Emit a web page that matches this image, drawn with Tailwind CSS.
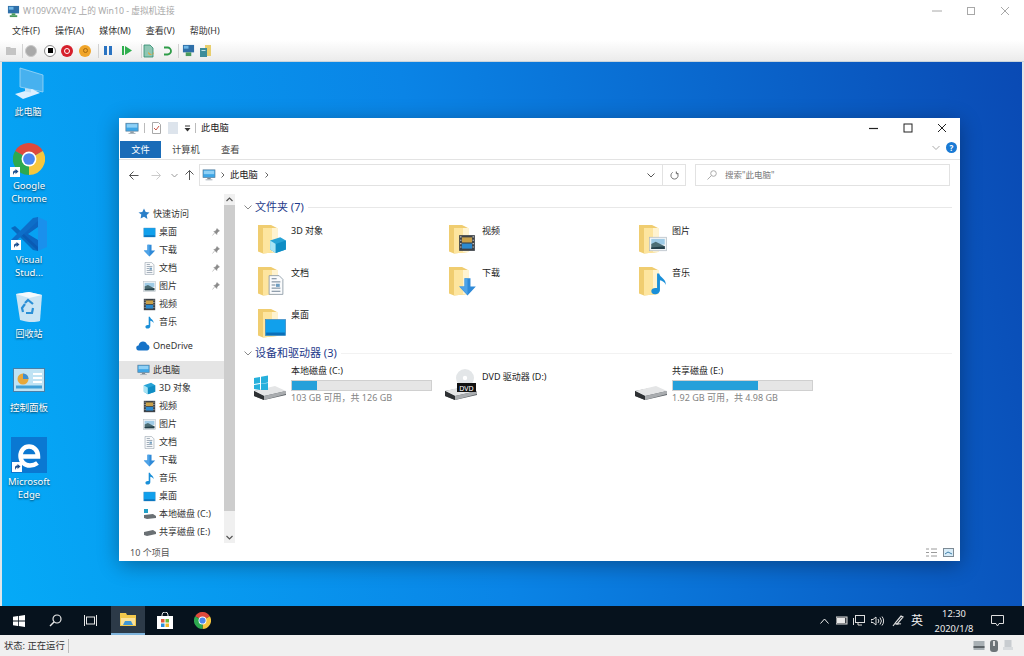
<!DOCTYPE html>
<html lang="zh-CN">
<head>
  <meta charset="UTF-8" />
  <title>W109VXV4Y2 上的 Win10 - 虚拟机连接</title>
  <script src="https://cdn.jsdelivr.net/npm/@tailwindcss/browser@4"></script>
</head>
<body class="w-[1024px] h-[656px] overflow-hidden bg-white font-['Noto_Sans','Noto_Sans_CJK_SC',sans-serif] text-[9px] leading-[12px] text-[#222]">

  <!-- shared icons -->
  <svg class="absolute w-0 h-0">
    <symbol id="pc" viewBox="0 0 16 14">
      <rect x="1" y="1" width="14" height="9" fill="#3ea6e6" stroke="#5b7f9b" stroke-width=".8"/>
      <rect x="2" y="2" width="12" height="4" fill="#8fd0f5"/>
      <rect x="6" y="10.500" width="4" height="1.500" fill="#7d8a94"/>
      <rect x="4" y="12" width="8" height="1.200" fill="#a9b4bc"/>
    </symbol>
    <symbol id="folder" viewBox="0 0 30 30">
      <path d="M1 1h13l6 3v24l-14 1.500-5-2z" fill="#f0cd70"/>
      <path d="M6 4h14.500v24l-14.500 1.500z" fill="#fde59f"/>
      <path d="M15 4h5.500v24h-5.500z" fill="#fff3d0"/>
    </symbol>
    <symbol id="i3d" viewBox="0 0 16 16">
      <path d="M1 4l9-3 5 3v8l-9 3-5-3z" fill="#27a3d6"/>
      <path d="M1 4l5 3v8l-5-3z" fill="#a8e4f5"/>
      <path d="M6 7l9-3v8l-9 3z" fill="#0f8dc4"/>
    </symbol>
    <symbol id="ivideo" viewBox="0 0 16 16">
      <rect x="1" y="1" width="14" height="14" fill="#3d4248"/>
      <rect x="3.500" y="3" width="9" height="4.500" fill="#c9a14a"/>
      <rect x="3.500" y="8.500" width="9" height="4.500" fill="#2b8ad0"/>
      <path d="M2 2h1v1h-1zM2 5h1v1h-1zM2 8h1v1h-1zM2 11h1v1h-1zM13 2h1v1h-1zM13 5h1v1h-1zM13 8h1v1h-1zM13 11h1v1h-1z" fill="#e8e8e8"/>
    </symbol>
    <symbol id="ipic" viewBox="0 0 16 16">
      <rect x="0.500" y="2" width="15" height="12" fill="#f1f4f6" stroke="#aeb8c0" stroke-width=".6"/>
      <rect x="2" y="3.500" width="12" height="5" fill="#9fcbe6"/>
      <path d="M2 8l4-2 8 4v2.500h-12z" fill="#4d6e75"/>
      <path d="M2 11l12-1v2.500h-12z" fill="#26404a"/>
    </symbol>
    <symbol id="idoc" viewBox="0 0 16 16">
      <path d="M2.500 .5h8l3 3v12h-11z" fill="#fafbfc" stroke="#8d9aa6" stroke-width=".7"/>
      <path d="M4.500 3h4M4.500 5.500h7M4.500 8h3M4.500 10.500h7M4.500 13h7" stroke="#6f8193" stroke-width=".8"/>
      <rect x="8" y="7" width="3" height="2.500" fill="#6f9dc0"/>
    </symbol>
    <symbol id="idown" viewBox="0 0 16 16">
      <path d="M5.500 1h5v7h4.500l-7 7.500-7-7.500h4.500z" fill="#2f8ad8"/>
      <path d="M5.500 1h2.500v14l-7-7h4.500z" fill="#4ea3e8"/>
    </symbol>
    <symbol id="imusic" viewBox="0 0 16 16">
      <path d="M7 1h1.500c.5 3 5 3.500 4.500 8-.5-2-2.500-3-4-3.300v6.800c0 1.800-1.700 3-3.500 3s-2.500-1.200-2.500-2.300c0-1.500 1.800-2.500 4-2z" fill="#1a8fd8"/>
    </symbol>
    <symbol id="idesk" viewBox="0 0 16 16">
      <rect x="1" y="2.500" width="14" height="11" fill="#11a0ec" stroke="#3a87bf" stroke-width=".5"/>
      <rect x="1.500" y="11.500" width="13" height="1.800" fill="#0b6fb8"/>
    </symbol>
    <symbol id="drive" viewBox="0 0 34 26">
      <path d="M1 16l21-4 11 5v3l-22 5-10-4z" fill="#5c6166"/>
      <path d="M1 16l21-5 11 5-22 5z" fill="#e4e5e6"/>
      <path d="M1 16l10 5v4l-10-4z" fill="#2d3033"/>
      <path d="M11 21l22-5v3l-22 6z" fill="#a9acaf"/>
    </symbol>
    <symbol id="chrome" viewBox="0 0 24 24">
      <path d="M12 12L1.600 6A12 12 0 0 1 22.400 6z" fill="#de4a3c"/>
      <path d="M12 12L22.400 6A12 12 0 0 1 12 24z" fill="#f6c63d"/>
      <path d="M12 12L12 24A12 12 0 0 1 1.600 6z" fill="#2da94f"/>
      <circle cx="12" cy="12" r="5.600" fill="#fff"/>
      <circle cx="12" cy="12" r="4.400" fill="#4b87ee"/>
    </symbol>
    <symbol id="shortcut" viewBox="0 0 10 10">
      <rect width="10" height="10" fill="#fff"/>
      <path d="M3 8V5.500c0-1.500 1-2 2.500-2V2L8.500 4.500 5.500 7V5.500C4.500 5.500 4 6 3 8z" fill="#1c4f8f"/>
    </symbol>
    <symbol id="pin" viewBox="0 0 8 8">
      <path d="M5 .5l2.500 2.500-1 .5-1.500 1.500-.2 1.500-3-3 1.500-.2L4.500 1.500zM2.500 5L.5 7.500" fill="#8a8a8a" stroke="#8a8a8a" stroke-width=".5"/>
    </symbol>
  </svg>

  <div class="flex flex-col w-[1024px] h-[656px]">

    <!-- vm window title -->
    <div class="h-[22px] flex items-center pl-[7px] text-[8.700px] text-[#a8a8a8] bg-white shrink-0">
      <svg class="w-[13px] h-[13px] mr-[3px]" viewBox="0 0 14 14">
        <rect x="1" y="1" width="12" height="8" fill="#2f6fa8"/>
        <rect x="2" y="2" width="5" height="3" fill="#6fb6e6"/>
        <rect x="5" y="9" width="4" height="2" fill="#4a9a5c"/>
        <rect x="3" y="11" width="8" height="2" fill="#4a9a5c"/>
      </svg>
      <span>W109VXV4Y2 上的 Win10 - 虚拟机连接</span>
      <div class="ml-auto flex items-center text-[#a8a8a8]">
        <svg class="w-[34px] h-[10px]" viewBox="0 0 34 10"><path d="M12 5h10" stroke="currentColor"/></svg>
        <svg class="w-[34px] h-[10px]" viewBox="0 0 34 10"><rect x="13.500" y="1.500" width="7" height="7" fill="none" stroke="currentColor"/></svg>
        <svg class="w-[34px] h-[10px] mr-[2px]" viewBox="0 0 34 10"><path d="M13 1l8 8M21 1l-8 8" stroke="currentColor"/></svg>
      </div>
    </div>

    <!-- vm menu -->
    <div class="h-[18px] flex items-center gap-[15px] pl-[12px] text-[9px] text-[#333] bg-white shrink-0">
      <span>文件(F)</span><span>操作(A)</span><span>媒体(M)</span><span>查看(V)</span><span>帮助(H)</span>
    </div>

    <!-- vm toolbar -->
    <div class="h-[22px] flex items-center pl-[5px] bg-linear-to-b from-white to-[#ebebeb] border-b border-[#c8d4dc] shrink-0">
      <svg class="w-[12px] h-[10px]" viewBox="0 0 12 10"><path d="M1 1h4l1 1h5v7H1z" fill="#c4c4c4"/></svg>
      <div class="w-px h-[14px] bg-[#d2d2d2] ml-[5px]"></div>
      <div class="w-[12px] h-[12px] rounded-full bg-[#a9a9a9] border border-[#c8c8c8] ml-[2px]"></div>
      <div class="w-[12px] h-[12px] rounded-full bg-white border border-[#888] ml-[7px] flex items-center justify-center"><div class="w-[5px] h-[5px] bg-black"></div></div>
      <div class="w-[12px] h-[12px] rounded-full bg-[#d6202c] ml-[5px] flex items-center justify-center"><div class="w-[6px] h-[6px] rounded-full border border-white"></div></div>
      <div class="w-[12px] h-[12px] rounded-full bg-[#f0a52a] ml-[6px] flex items-center justify-center"><div class="w-[5px] h-[5px] rounded-full border border-[#a86a10]"></div></div>
      <div class="w-px h-[14px] bg-[#d2d2d2] ml-[7px]"></div>
      <div class="flex gap-[2px] ml-[5px]"><div class="w-[3px] h-[9px] bg-[#2a73c2]"></div><div class="w-[3px] h-[9px] bg-[#2a73c2]"></div></div>
      <div class="flex items-center ml-[10px]">
        <div class="w-[2px] h-[9px] bg-[#2fae4e] mr-[1px]"></div>
        <svg class="w-[7px] h-[9px]" viewBox="0 0 7 9"><path d="M0 0l7 4.500-7 4.500z" fill="#2fae4e"/></svg>
      </div>
      <div class="w-px h-[14px] bg-[#d2d2d2] ml-[9px]"></div>
      <svg class="w-[12px] h-[14px] ml-[1px]" viewBox="0 0 12 14"><path d="M1 1h6l3 3v9H1z" fill="#8fc7b4" stroke="#2c8a6c" stroke-width=".8"/><path d="M5 8a3 3 0 1 0 6 0l-2 3z" fill="#e9a43a"/></svg>
      <svg class="w-[10px] h-[10px] ml-[7px]" viewBox="0 0 10 10"><path d="M2 1.500h3.500a3.500 3.500 0 0 1 0 7H2" fill="none" stroke="#2e9c48" stroke-width="1.800"/></svg>
      <div class="w-px h-[14px] bg-[#d2d2d2] ml-[6px]"></div>
      <svg class="w-[13px] h-[13px] ml-[3px]" viewBox="0 0 14 14"><rect x="1" y="1" width="12" height="8" fill="#2f6fa8"/><rect x="2" y="2" width="5" height="3" fill="#6fb6e6"/><rect x="4" y="9" width="6" height="4" fill="#4a9a5c"/></svg>
      <svg class="w-[13px] h-[14px] ml-[4px]" viewBox="0 0 13 14"><rect x="6" y="1" width="6" height="11" fill="#e8cf6e"/><rect x="1" y="4" width="7" height="9" fill="#3d8c99"/><rect x="2.500" y="6" width="4" height="1" fill="#bfe3e8"/></svg>
    </div>

    <!-- desktop -->
    <div class="relative flex-1 min-h-0 border-l-2 border-r-2 border-[#dfe6ea] bg-linear-[78deg] from-[#05aaf7] via-[#0a84e6] via-45% to-[#0a4ab4]">

      <!-- desktop icons -->
      <div class="absolute left-[-3px] top-[5px] w-[58px] flex flex-col items-center text-white text-[9px] leading-[13px] [text-shadow:0_1px_2px_#000a]">
        <svg class="w-[34px] h-[36px]" viewBox="0 0 34 36">
          <path d="M9 1l23 7v17L9 20z" fill="#5db7ee" fill-opacity=".75" stroke="#9fd8f8" stroke-width=".8"/>
          <path d="M4 27l17-5 8 4-17 6z" fill="#dcefff"/>
          <path d="M14 21l6 1.500v3l-6-1z" fill="#bde0f7"/>
        </svg>
        <span class="mt-[2px]">此电脑</span>
      </div>
      <div class="absolute left-[-2px] top-[81px] w-[58px] flex flex-col items-center text-white text-[9.500px] leading-[13px] text-center [text-shadow:0_1px_2px_#000a]">
        <div class="relative w-[32px] h-[32px]">
          <svg class="w-[32px] h-[32px]"><use href="#chrome"/></svg>
          <svg class="absolute left-[-3px] bottom-[-2px] w-[10px] h-[10px]"><use href="#shortcut"/></svg>
        </div>
        <span class="mt-[4px]">Google<br>Chrome</span>
      </div>
      <div class="absolute left-[-2px] top-[154px] w-[58px] flex flex-col items-center text-white text-[9.500px] leading-[13px] text-center [text-shadow:0_1px_2px_#000a]">
        <div class="relative w-[38px] h-[36px]">
          <svg class="w-[38px] h-[36px]" viewBox="0 0 38 36">
            <path d="M28 1l9 4v26l-9 4z" fill="#1a90ec"/>
            <path d="M28 1L10 18l18 17V24L18 18l10-7z" fill="#0c66c2"/>
            <path d="M1 12l4-2 23 21v4l-5-1z" fill="#0a57ad" fill-opacity=".75"/>
            <path d="M1 24l4 2L28 5V1l-5 1z" fill="#0d6ec9"/>
          </svg>
          <svg class="absolute left-[1px] bottom-[2px] w-[10px] h-[10px]"><use href="#shortcut"/></svg>
        </div>
        <span class="mt-[1px]">Visual<br>Stud...</span>
      </div>
      <div class="absolute left-[-2px] top-[229px] w-[58px] flex flex-col items-center text-white text-[9px] leading-[13px] [text-shadow:0_1px_2px_#000a]">
        <svg class="w-[30px] h-[32px]" viewBox="0 0 30 32">
          <path d="M2 3l13-2 13 3-2 26c-6 2-14 1-20-1z" fill="#c9e4f4"/>
          <path d="M2 3l13-2 13 3-13 3z" fill="#f4fafd"/>
          <path d="M11 12l3 -3 5 4M19 17l-1 5-6 0M9 21l-1-4 3-4" fill="none" stroke="#2a8fd6" stroke-width="2.200"/>
        </svg>
        <span class="mt-[4px]">回收站</span>
      </div>
      <div class="absolute left-[-2px] top-[306px] w-[58px] flex flex-col items-center text-white text-[9.500px] leading-[13px] [text-shadow:0_1px_2px_#000a]">
        <svg class="w-[32px] h-[24px]" viewBox="0 0 32 24">
          <rect x=".5" y=".5" width="31" height="23" fill="#bfe3f4" stroke="#4a7fa6"/>
          <circle cx="10" cy="11" r="5.500" fill="#e8a83a"/>
          <path d="M10 11V5.500a5.500 5.500 0 0 1 5.500 5.500z" fill="#3d8fd1"/>
          <path d="M20 6h9M20 10h9M20 14h9" stroke="#fff" stroke-width="2"/>
          <path d="M3 19h26" stroke="#3fa0d8" stroke-width="3"/>
        </svg>
        <span class="mt-[9px]">控制面板</span>
      </div>
      <div class="absolute left-[-2px] top-[375px] w-[58px] flex flex-col items-center text-white text-[9.500px] leading-[13px] text-center [text-shadow:0_1px_2px_#000a]">
        <div class="relative w-[36px] h-[36px] bg-[#0a78d2]">
          <svg class="w-[36px] h-[36px]" viewBox="0 0 36 36">
            <path d="M10 19.500h17c0-6-4-10-9-10s-8.500 4-8.500 9.500 4 9.500 9.500 9.500c3 0 5.500-1 7.500-2.500" fill="none" stroke="#fff" stroke-width="4.500"/>
          </svg>
          <svg class="absolute left-[1px] bottom-[1px] w-[10px] h-[10px]"><use href="#shortcut"/></svg>
        </div>
        <span class="mt-[2px]">Microsoft<br>Edge</span>
      </div>

      <!-- explorer window -->
      <div class="absolute left-[117px] top-[56px] w-[841px] h-[443px] bg-white flex flex-col shadow-[0_4px_20px_#0005]">

        <!-- title row -->
        <div class="h-[20px] flex items-center pl-[6px] shrink-0 text-[9.500px]">
          <svg class="w-[14px] h-[13px]"><use href="#pc"/></svg>
          <div class="w-px h-[10px] bg-[#bbb] ml-[5px]"></div>
          <svg class="w-[9px] h-[12px] ml-[7px]" viewBox="0 0 9 12"><path d="M.5.5h6l2 2v9h-8z" fill="#fff" stroke="#a9a9a9"/><path d="M2 6l2 2 3-4" fill="none" stroke="#c9584a"/></svg>
          <div class="w-[10px] h-[12px] bg-[#dde4ec] ml-[7px]"></div>
          <svg class="w-[7px] h-[7px] ml-[6px]" viewBox="0 0 7 7"><path d="M1 1h5" stroke="#333"/><path d="M.5 3h6L3.500 6.500z" fill="#333"/></svg>
          <div class="w-px h-[10px] bg-[#bbb] ml-[4px]"></div>
          <span class="ml-[5px] text-[9.300px]">此电脑</span>
          <div class="ml-auto flex items-center text-[#222]">
            <svg class="w-[34px] h-[10px]" viewBox="0 0 34 10"><path d="M12 5.500h9" stroke="currentColor" stroke-width="1.200"/></svg>
            <svg class="w-[34px] h-[10px]" viewBox="0 0 34 10"><rect x="13" y="1" width="8" height="8" fill="none" stroke="currentColor"/></svg>
            <svg class="w-[34px] h-[10px] mr-[1px]" viewBox="0 0 34 10"><path d="M13 1l8 8M21 1l-8 8" stroke="currentColor"/></svg>
          </div>
        </div>

        <!-- ribbon tabs -->
        <div class="h-[22px] flex items-start shrink-0 border-b border-[#e3e3e3] pt-[3px] pl-[1px] text-[9.300px]">
          <div class="w-[41px] h-[17px] bg-[#1a6cb8] text-white flex items-center justify-center">文件</div>
          <span class="ml-[11px] mt-[3px] text-[#444]">计算机</span>
          <span class="ml-[21px] mt-[3px] text-[#444]">查看</span>
          <div class="ml-auto flex items-center gap-[6px] pr-[3px] mt-[1px]">
            <svg class="w-[8px] h-[6px]" viewBox="0 0 8 6"><path d="M.5 1l3.500 3.500L7.500 1" fill="none" stroke="#aaa"/></svg>
            <div class="w-[11px] h-[11px] rounded-full bg-[#1a7ad4] text-white text-[8px] leading-[11px] text-center font-bold">?</div>
          </div>
        </div>

        <!-- nav row -->
        <div class="h-[30px] flex items-center shrink-0 pl-[10px] pr-[10px]">
          <svg class="w-[10px] h-[9px]" viewBox="0 0 10 9"><path d="M4.500 .5l-4 4 4 4M.5 4.500h9" fill="none" stroke="#555"/></svg>
          <svg class="w-[10px] h-[9px] ml-[12px]" viewBox="0 0 10 9"><path d="M5.500 .5l4 4-4 4M9.500 4.500h-9" fill="none" stroke="#ccc"/></svg>
          <svg class="w-[7px] h-[5px] ml-[10px]" viewBox="0 0 7 5"><path d="M.5 1l3 3 3-3" fill="none" stroke="#999"/></svg>
          <svg class="w-[9px] h-[10px] ml-[7px]" viewBox="0 0 9 10"><path d="M.5 4.500l4-4 4 4M4.500 .5v9.500" fill="none" stroke="#555"/></svg>
          <div class="w-[487px] h-[22px] ml-[5px] border border-[#e2e2e2] flex items-center pl-[2px]">
            <svg class="w-[14px] h-[12px]"><use href="#pc"/></svg>
            <svg class="w-[4px] h-[6px] ml-[5px]" viewBox="0 0 4 6"><path d="M.5.5L3 3 .5 5.500" fill="none" stroke="#666"/></svg>
            <span class="ml-[5px] text-[9.300px]">此电脑</span>
            <svg class="w-[4px] h-[6px] ml-[7px]" viewBox="0 0 4 6"><path d="M.5.5L3 3 .5 5.500" fill="none" stroke="#666"/></svg>
            <svg class="w-[8px] h-[5px] ml-auto mr-[7px]" viewBox="0 0 8 5"><path d="M.5 .5L4 4l3.500-3.500" fill="none" stroke="#555"/></svg>
            <div class="w-[23px] h-full border-l border-[#e2e2e2] flex items-center justify-center">
              <svg class="w-[9px] h-[9px]" viewBox="0 0 10 10"><path d="M3 1.500a4 4 0 1 0 4 0M7 .5v2.500h2.500" fill="none" stroke="#666"/></svg>
            </div>
          </div>
          <div class="flex-1 h-[22px] ml-[9px] border border-[#e2e2e2] flex items-center pl-[11px] text-[#777] text-[8.500px]">
            <svg class="w-[10px] h-[10px] mr-[8px]" viewBox="0 0 10 10"><circle cx="6.500" cy="3.500" r="2.800" fill="none" stroke="#aaa"/><path d="M4.500 5.500L.5 9.500" stroke="#aaa"/></svg>
            <span>搜索"此电脑"</span>
          </div>
        </div>

        <!-- body -->
        <div class="flex flex-1 min-h-0">

          <!-- sidebar -->
          <div class="w-[118px] shrink-0 flex">
            <div class="w-[105px] pt-[15px] text-[#333]">
              <div class="h-[18px] flex items-center pl-[19px]"><svg class="w-[12px] h-[12px] mr-[3px]" viewBox="0 0 12 12"><path d="M6 .5l1.700 3.500 3.800.5-2.800 2.600.7 3.900L6 8.700 2.600 10.500l.7-3.900L.5 4.500l3.800-.5z" fill="#2a7fc8"/></svg>快速访问</div>
              <div class="h-[18px] flex items-center pl-[24px]"><svg class="w-[13px] h-[13px] mr-[3px]"><use href="#idesk"/></svg>桌面<svg class="w-[8px] h-[8px] ml-auto mr-[4px]"><use href="#pin"/></svg></div>
              <div class="h-[18px] flex items-center pl-[24px]"><svg class="w-[13px] h-[13px] mr-[3px]"><use href="#idown"/></svg>下载<svg class="w-[8px] h-[8px] ml-auto mr-[4px]"><use href="#pin"/></svg></div>
              <div class="h-[18px] flex items-center pl-[24px]"><svg class="w-[13px] h-[13px] mr-[3px]"><use href="#idoc"/></svg>文档<svg class="w-[8px] h-[8px] ml-auto mr-[4px]"><use href="#pin"/></svg></div>
              <div class="h-[18px] flex items-center pl-[24px]"><svg class="w-[13px] h-[13px] mr-[3px]"><use href="#ipic"/></svg>图片<svg class="w-[8px] h-[8px] ml-auto mr-[4px]"><use href="#pin"/></svg></div>
              <div class="h-[18px] flex items-center pl-[24px]"><svg class="w-[13px] h-[13px] mr-[3px]"><use href="#ivideo"/></svg>视频</div>
              <div class="h-[18px] flex items-center pl-[24px]"><svg class="w-[13px] h-[13px] mr-[3px]"><use href="#imusic"/></svg>音乐</div>
              <div class="h-[18px] flex items-center pl-[17px] mt-[6px]"><svg class="w-[14px] h-[10px] mr-[3px]" viewBox="0 0 14 10"><path d="M3 9.500a2.500 2.500 0 0 1-.5-5C3 2 5 .5 7 .5c2 0 3.500 1 4 3 1.500 0 2.500 1.500 2.500 3s-1 3-2.500 3z" fill="#1673c8"/></svg>OneDrive</div>
              <div class="h-[18px] flex items-center pl-[18px] mt-[6px] bg-[#e5e5e5]"><svg class="w-[13px] h-[12px] mr-[3px]"><use href="#pc"/></svg>此电脑</div>
              <div class="h-[18px] flex items-center pl-[24px]"><svg class="w-[13px] h-[13px] mr-[3px]"><use href="#i3d"/></svg>3D 对象</div>
              <div class="h-[18px] flex items-center pl-[24px]"><svg class="w-[13px] h-[13px] mr-[3px]"><use href="#ivideo"/></svg>视频</div>
              <div class="h-[18px] flex items-center pl-[24px]"><svg class="w-[13px] h-[13px] mr-[3px]"><use href="#ipic"/></svg>图片</div>
              <div class="h-[18px] flex items-center pl-[24px]"><svg class="w-[13px] h-[13px] mr-[3px]"><use href="#idoc"/></svg>文档</div>
              <div class="h-[18px] flex items-center pl-[24px]"><svg class="w-[13px] h-[13px] mr-[3px]"><use href="#idown"/></svg>下载</div>
              <div class="h-[18px] flex items-center pl-[24px]"><svg class="w-[13px] h-[13px] mr-[3px]"><use href="#imusic"/></svg>音乐</div>
              <div class="h-[18px] flex items-center pl-[24px]"><svg class="w-[13px] h-[13px] mr-[3px]"><use href="#idesk"/></svg>桌面</div>
              <div class="h-[18px] flex items-center pl-[24px]"><svg class="w-[13px] h-[10px] mr-[3px]" viewBox="0 0 13 10"><rect x="1" y="0" width="4" height="4" fill="#22a0c8"/><path d="M1 6l9-1 3 2v2l-9 1-3-1z" fill="#6a7074"/></svg>本地磁盘 (C:)</div>
              <div class="h-[18px] flex items-center pl-[24px]"><svg class="w-[13px] h-[8px] mr-[3px]" viewBox="0 0 13 8"><path d="M1 4l9-2 3 2v2l-9 2-3-1z" fill="#6a7074"/></svg>共享磁盘 (E:)</div>
            </div>
            <!-- scrollbar -->
            <div class="w-[11px] flex flex-col bg-[#f0f0f0] mt-[4px]">
              <div class="h-[11px] flex items-center justify-center"><svg class="w-[7px] h-[5px]" viewBox="0 0 7 5"><path d="M.5 4l3-3 3 3" fill="none" stroke="#555" stroke-width="1.200"/></svg></div>
              <div class="h-[306px] bg-[#cdcdcd]"></div>
              <div class="flex-1"></div>
              <div class="h-[12px] flex items-center justify-center"><svg class="w-[7px] h-[5px]" viewBox="0 0 7 5"><path d="M.5 1l3 3 3-3" fill="none" stroke="#555" stroke-width="1.200"/></svg></div>
            </div>
          </div>

          <!-- main pane -->
          <div class="flex-1 min-w-0 pt-[10px] pl-[7px] pr-[8px]">
            <div class="h-[14px] flex items-center text-[11px] text-[#1e3a8a]">
              <svg class="w-[8px] h-[5px] mr-[3px]" viewBox="0 0 8 5"><path d="M.5 .5L4 4l3.500-3.500" fill="none" stroke="#8a8a8a"/></svg>
              <span>文件夹 (7)</span>
              <div class="flex-1 h-px bg-[#e8e8e8] ml-[4px]"></div>
            </div>
            <div class="grid grid-cols-[191px_190px_1fr] gap-y-[13px] mt-[10px] pl-[13px]">
              <div class="flex h-[29px]"><svg class="w-[30px] h-[30px] mr-[4px]" viewBox="0 0 30 30"><use href="#folder"/><use href="#i3d" x="12" y="12" width="18" height="18"/></svg><span class="leading-[13px]">3D 对象</span></div>
              <div class="flex h-[29px]"><svg class="w-[30px] h-[30px] mr-[4px]" viewBox="0 0 30 30"><use href="#folder"/><use href="#ivideo" x="10" y="10" width="18" height="18"/></svg><span class="leading-[13px]">视频</span></div>
              <div class="flex h-[29px]"><svg class="w-[30px] h-[30px] mr-[4px]" viewBox="0 0 30 30"><use href="#folder"/><use href="#ipic" x="10" y="11" width="20" height="18"/></svg><span class="leading-[13px]">图片</span></div>
              <div class="flex h-[29px]"><svg class="w-[30px] h-[30px] mr-[4px]" viewBox="0 0 30 30"><use href="#folder"/><use href="#idoc" x="9" y="9" width="20" height="20"/></svg><span class="leading-[13px]">文档</span></div>
              <div class="flex h-[29px]"><svg class="w-[30px] h-[30px] mr-[4px]" viewBox="0 0 30 30"><use href="#folder"/><use href="#idown" x="10" y="11" width="19" height="19"/></svg><span class="leading-[13px]">下载</span></div>
              <div class="flex h-[29px]"><svg class="w-[30px] h-[30px] mr-[4px]" viewBox="0 0 30 30"><use href="#folder"/><use href="#imusic" x="9" y="6" width="23" height="23"/></svg><span class="leading-[13px]">音乐</span></div>
              <div class="flex h-[29px]"><svg class="w-[30px] h-[30px] mr-[4px]" viewBox="0 0 30 30"><use href="#folder"/><use href="#idesk" x="7" y="8" width="23" height="23"/></svg><span class="leading-[13px]">桌面</span></div>
            </div>
            <div class="h-[14px] mt-[9px] flex items-center text-[11px] text-[#1e3a8a]">
              <svg class="w-[8px] h-[5px] mr-[3px]" viewBox="0 0 8 5"><path d="M.5 .5L4 4l3.500-3.500" fill="none" stroke="#8a8a8a"/></svg>
              <span>设备和驱动器 (3)</span>
              <div class="flex-1 h-px bg-[#f2f2f2] ml-[4px]"></div>
            </div>
            <div class="grid grid-cols-[191px_190px_1fr] mt-[5px] pl-[9px]">
              <div class="flex">
                <svg class="w-[34px] h-[36px] mr-[4px] shrink-0" viewBox="0 0 34 36"><use href="#drive" y="10" width="34" height="26"/><path d="M1 13l6-1v6l-6 1zM8 11.800l7-1.200v7l-7 1.200zM1 20l6-1v6l-6-1zM8 19l7-1v7l-7 0z" fill="#27b0dc"/></svg>
                <div>
                  <div class="h-[12px]">本地磁盘 (C:)</div>
                  <div class="w-[141px] h-[11px] mt-[3px] bg-[#e6e6e6] border border-[#d0d0d0]"><div class="h-full bg-[#26a0da]" style="width:18%"></div></div>
                  <div class="mt-[1px] text-[#848484]">103 GB 可用，共 126 GB</div>
                </div>
              </div>
              <div class="flex">
                <svg class="w-[34px] h-[36px] mr-[4px] shrink-0" viewBox="0 0 34 36"><use href="#drive" y="10" width="34" height="26"/><circle cx="21" cy="13" r="9" fill="#e3e6e8"/><circle cx="21" cy="13" r="2.200" fill="#fff"/><rect x="13" y="18" width="19" height="9" fill="#111"/><text x="22.500" y="25.500" text-anchor="middle" font-size="7" fill="#fff">DVD</text></svg>
                <div class="mt-[6px]">DVD 驱动器 (D:)</div>
              </div>
              <div class="flex">
                <svg class="w-[34px] h-[36px] mr-[4px] shrink-0" viewBox="0 0 34 36"><use href="#drive" y="10" width="34" height="26"/></svg>
                <div>
                  <div class="h-[12px]">共享磁盘 (E:)</div>
                  <div class="w-[141px] h-[11px] mt-[3px] bg-[#e6e6e6] border border-[#d0d0d0]"><div class="h-full bg-[#26a0da]" style="width:61%"></div></div>
                  <div class="mt-[1px] text-[#848484]">1.92 GB 可用，共 4.98 GB</div>
                </div>
              </div>
            </div>
          </div>
        </div>

        <!-- explorer status -->
        <div class="h-[18px] flex items-center pl-[11px] pr-[6px] pt-[1px] shrink-0 text-[#555]">
          <span>10 个项目</span>
          <svg class="w-[11px] h-[9px] ml-auto" viewBox="0 0 11 9"><path d="M0 1h3M0 4.500h3M0 8h3M5 1h6M5 4.500h6M5 8h6" stroke="#9a9a9a"/></svg>
          <svg class="w-[11px] h-[9px] ml-[6px]" viewBox="0 0 11 9"><rect x=".5" y=".5" width="10" height="8" fill="#d8ecf8" stroke="#7d8a94"/><path d="M2 6l3-2 4 2" fill="none" stroke="#3f7fa8"/></svg>
        </div>
      </div>
    </div>

    <!-- taskbar -->
    <div class="h-[29px] flex items-stretch bg-[#06121d] text-white shrink-0">
      <div class="w-[37px] flex items-center justify-center">
        <svg class="w-[12px] h-[12px]" viewBox="0 0 12 12"><path d="M0 1.700L5 1v4.600H0zM5.800.9L12 0v5.600H5.800zM0 6.400h5V11l-5-.7zM5.800 6.400H12V12l-6.200-.9z" fill="#fff"/></svg>
      </div>
      <div class="w-[37px] flex items-center justify-center">
        <svg class="w-[13px] h-[13px]" viewBox="0 0 13 13"><circle cx="8" cy="5" r="4" fill="none" stroke="#e8e8e8" stroke-width="1.200"/><path d="M5 8l-4 4" stroke="#e8e8e8" stroke-width="1.400"/></svg>
      </div>
      <div class="w-[33px] flex items-center justify-center">
        <svg class="w-[13px] h-[13px]" viewBox="0 0 13 13"><rect x="2.500" y="3" width="8" height="7" fill="none" stroke="#e8e8e8"/><path d="M.5 1v11M12.500 1v11" stroke="#e8e8e8"/></svg>
      </div>
      <div class="w-[34px] ml-[4px] bg-[#2c3a48] border-b-2 border-[#7fb4dc] flex items-center justify-center">
        <svg class="w-[16px] h-[13px]" viewBox="0 0 16 13"><path d="M0 0h6l1 2h9v11H0z" fill="#f2c84c"/><rect x="1" y="5" width="14" height="7" fill="#fbe29a"/><path d="M3 12l2-4h6l2 4z" fill="#3f97d6"/></svg>
      </div>
      <div class="w-[40px] flex items-center justify-center">
        <svg class="w-[16px] h-[17px]" viewBox="0 0 16 17"><path d="M5 5V3a3 3 0 0 1 6 0v2" fill="none" stroke="#e8e8e8"/><rect x="0" y="4" width="16" height="13" fill="#fff"/><rect x="4" y="7" width="3.500" height="3.500" fill="#e25a3a"/><rect x="8.500" y="7" width="3.500" height="3.500" fill="#6fb83a"/><rect x="4" y="11.500" width="3.500" height="3.500" fill="#2a8fdc"/><rect x="8.500" y="11.500" width="3.500" height="3.500" fill="#f2b92c"/></svg>
      </div>
      <div class="w-[34px] flex items-center justify-center">
        <svg class="w-[17px] h-[17px]"><use href="#chrome"/></svg>
      </div>
      <div class="ml-auto flex items-center pr-[1px]">
        <svg class="w-[9px] h-[6px]" viewBox="0 0 9 6"><path d="M.5 5.500l4-4.500 4 4.500" fill="none" stroke="#eee"/></svg>
        <svg class="w-[12px] h-[9px] ml-[7px]" viewBox="0 0 12 9"><rect x="0" y="1" width="11" height="7" fill="#3a3f44" stroke="#ddd"/><rect x="1" y="2" width="8" height="5" fill="#e8e8e8"/></svg>
        <svg class="w-[12px] h-[11px] ml-[5px]" viewBox="0 0 12 11"><rect x="2.500" y=".5" width="9" height="7" fill="none" stroke="#ddd"/><path d="M.5 3v7M5 8v2h4" stroke="#ddd"/></svg>
        <svg class="w-[13px] h-[10px] ml-[6px]" viewBox="0 0 13 10"><path d="M0 3.500h2L5 1v8L2 6.500H0z" fill="none" stroke="#ddd"/><path d="M7 3a3 3 0 0 1 0 4M9 1.500a5.500 5.500 0 0 1 0 7M11 .5a7 7 0 0 1 0 9" fill="none" stroke="#ddd"/></svg>
        <svg class="w-[13px] h-[13px] ml-[8px]" viewBox="0 0 13 13"><path d="M1 12l3-4 5-6 2 1-5 6-2 1c2 1 3-1 5 0" fill="none" stroke="#ddd" stroke-width="1.200"/></svg>
        <span class="ml-[6px] w-[13px] text-[12px] text-[#eee]">英</span>
        <div class="w-[48px] ml-[6px] text-center text-[9.300px] leading-[15px] text-[#eee]">12:30<br>2020/1/8</div>
        <svg class="w-[13px] h-[12px] ml-[13px] mr-[19px]" viewBox="0 0 13 12"><path d="M.5.5h12v8H8L6.500 11 5 8.500H.5z" fill="none" stroke="#ddd"/></svg>
      </div>
    </div>

    <!-- vm status bar -->
    <div class="h-[21px] flex items-center bg-[#f0f0f0] text-[#333] shrink-0 pl-[4px]">
      <span class="text-[9.300px]">状态: 正在运行</span>
      <div class="w-px h-[14px] bg-[#bbb] ml-[3px]"></div>
      <div class="ml-auto flex items-center gap-[5px] pr-[11px]">
        <svg class="w-[12px] h-[9px]" viewBox="0 0 11 9"><rect width="11" height="9" fill="#a9b0b4"/><rect y="5" width="11" height="2" fill="#5d6367"/></svg>
        <svg class="w-[8px] h-[12px]" viewBox="0 0 8 12"><rect width="8" height="12" rx="3" fill="#6d7478"/><rect x="3" y="1" width="2" height="5" fill="#ddd"/></svg>
        <svg class="w-[10px] h-[11px]" viewBox="0 0 10 11"><rect x="1.500" y="0" width="7" height="7" fill="#c8ccd0"/><rect y="7" width="10" height="3" fill="#d8dbde"/></svg>
      </div>
    </div>
  </div>
</body>
</html>
